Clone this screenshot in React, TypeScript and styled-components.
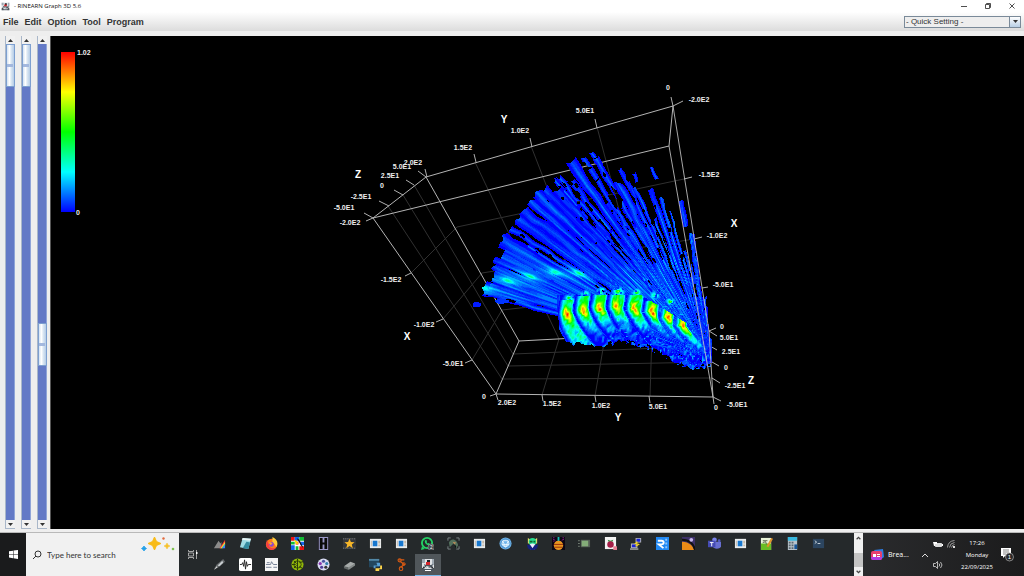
import React from "react";
import styled, { createGlobalStyle } from "styled-components";

const GlobalStyle = createGlobalStyle`
  *, *::before, *::after { box-sizing: border-box; }
  body { margin: 0; background: #eeeeee; font-family: "Liberation Sans", Arial, sans-serif; }
  button { border: 0; padding: 0; margin: 0; background: none; font: inherit; color: inherit; }
  svg { display: block; }
`;

/* ---------- window frame ---------- */

const Screen = styled.div`
  display: flex;
  flex-direction: column;
  height: 100vh;
  overflow: hidden;
`;

const TitleBar = styled.header`
  display: flex;
  align-items: center;
  height: 12px;
  padding-left: 1px;
  background: #fff;
`;

const Title = styled.h1`
  flex: 1;
  margin: 0 0 0 4px;
  font: 400 6px/12px "Open Sans", "Noto Sans", sans-serif;
  color: #111;
`;

const WindowButton = styled.button`
  display: grid;
  place-items: center;
  width: 24px;
  height: 12px;
`;

const MenuBar = styled.nav`
  display: flex;
  align-items: center;
  gap: 6px;
  height: 19px;
  padding: 0 3px;
  background: linear-gradient(#ffffff, #dcdcdc);
`;

const MenuButton = styled.button`
  font-size: 9px;
  line-height: 18px;
  font-weight: 700;
  color: #333;
`;

const SelectFrame = styled.label`
  display: flex;
  width: 117px;
  height: 12px;
  margin-left: auto;
  border: 1px solid #7a8a99;
  background: #eeeeee;
`;

const QuickSelect = styled.select`
  flex: 1;
  min-width: 0;
  appearance: none;
  border: 0;
  padding: 0 0 0 1px;
  background: transparent;
  font: 400 8px/10px "Liberation Sans", Arial, sans-serif;
  color: #333;
`;

const SelectArrow = styled.span`
  display: grid;
  place-items: center;
  width: 11px;
  border-left: 1px solid #7a8a99;
  background: linear-gradient(#ffffff, #b8cfe5);
`;

const Workspace = styled.main`
  display: flex;
  flex: 1;
  min-height: 0;
  padding: 5px 0 3px;
`;

const SliderRack = styled.div`
  display: flex;
  gap: 6px;
  padding: 0 3px 0 5px;
`;

const ScrollColumn = styled.div`
  display: flex;
  flex-direction: column;
  width: 10px;
  border: 1px solid #a9b7c9;
  border-width: 0 0 1px 1px;
`;

const ArrowButton = styled.button`
  display: grid;
  place-items: center;
  height: 8px;
  background: #f1f1f1;
`;

const RangeInput = styled.input`
  flex: 1;
  min-height: 0;
  width: 9px;
  margin: 0;
  appearance: none;
  writing-mode: vertical-lr;
  background: #6379c6;
  border-right: 1px solid #8fa4d8;
  &::-webkit-slider-thumb {
    appearance: none;
    width: 9px;
    height: 43px;
    border: 1px solid #7d9fd0;
    background:
      linear-gradient(#a3b8de, #a3b8de) center / 6px 3px no-repeat,
      linear-gradient(90deg, #d3e2f2, #ffffff 35%, #dbe7f3 60%, #b5cce6);
  }
`;

const PlotPane = styled.section`
  flex: 1;
  min-width: 0;
  background: #000;
  border-left: 1px solid #555;
  svg { width: 100%; height: 100%; }
`;

const TickText = styled.text`
  font: 700 7px "Liberation Sans", Arial, sans-serif;
  fill: #eee;
`;

const AxisText = styled.text`
  font: 700 10px "Liberation Sans", Arial, sans-serif;
  fill: #fff;
`;

/* ---------- scatter field ---------- */

const hash = (x: number, y: number) => {
  let h = Math.imul(x | 0, 374761393) + Math.imul(y | 0, 668265263);
  h = Math.imul(h ^ (h >>> 13), 1274126177);
  return ((h ^ (h >>> 16)) >>> 0) / 4294967296;
};

const noise = (x: number, y: number) => {
  const ix = Math.floor(x);
  const iy = Math.floor(y);
  const sx = x - ix;
  const sy = y - iy;
  const fx = sx * sx * (3 - 2 * sx);
  const fy = sy * sy * (3 - 2 * sy);
  const top = hash(ix, iy) * (1 - fx) + hash(ix + 1, iy) * fx;
  const low = hash(ix, iy + 1) * (1 - fx) + hash(ix + 1, iy + 1) * fx;
  return top * (1 - fy) + low * fy;
};

/* angle, half width in degrees, inner radius, outer radius, raggedness */
const beams: number[][] = [
  [16.2, 0.9, 150, 236, 0.1], [18.1, 1.1, 60, 238, 0.05], [20.4, 1.2, 60, 232, 0.1],
  [22.6, 1.1, 60, 236, 0.1], [24.6, 0.9, 60, 238, 0.2], [26.4, 0.9, 60, 228, 0.2],
  [29.4, 1.9, 60, 240, 0], [31.4, 0.6, 40, 214, 0.2], [33, 0.8, 40, 237, 0.2],
  [35.7, 1.5, 40, 237, 0], [38.4, 1.4, 40, 239, 0], [40.9, 1, 40, 238, 0.05],
  [43.4, 1.3, 30, 240, 0.05], [45.5, 1, 30, 236, 0.1], [47.4, 1.1, 30, 228, 0.1],
  [48.9, 0.5, 150, 237, 0.4], [50, 0.6, 40, 240, 0.4], [51.8, 0.9, 30, 226, 0.3],
  [54.6, 1.4, 30, 241, 0.02], [56.5, 0.6, 30, 185, 0.5], [57.7, 0.7, 30, 236, 0.35],
  [60.4, 0.8, 30, 230, 0.35], [60.4, 0.5, 230, 237, 0], [62.4, 1.3, 20, 199, 0.1],
  [64.8, 0.7, 30, 210, 0.35], [66.3, 0.7, 20, 187, 0.4], [67.4, 0.5, 190, 200, 0.1],
  [68.6, 0.5, 20, 150, 0.4], [70.7, 1, 20, 180, 0.1], [73, 0.8, 20, 168, 0.4],
  [73.4, 0.5, 186, 200, 0.1], [75.2, 0.6, 20, 152, 0.3], [77, 0.5, 20, 110, 0.4],
  [79.7, 1, 133, 161, 0.25], [81.4, 1.1, 10, 127, 0.05], [85, 1.4, 0, 62, 0.5],
];

/* hottest point of each crest, its lean and its core strength */
const crests: number[][] = [
  [566, 314, 0.1, 0.5], [582, 310, 0.3, 0.46], [598, 307, 0.3, 0.44], [615, 306, 0.3, 0.46],
  [633, 308, 0.35, 0.44], [651, 311, 0.45, 0.44], [667, 317, 0.55, 0.4], [682, 325, 0.65, 0.4],
];

const glows: number[][] = [[507, 280], [530, 276], [554, 272], [484, 288], [578, 273]];

const floorLine: number[][] = [
  [556, 298], [559, 330], [566, 342], [600, 345], [625, 340], [650, 347],
  [670, 358], [690, 367], [712, 364],
];

const floorAt = (x: number) => {
  for (let i = 1; i < floorLine.length; i++) {
    const [x1, y1] = floorLine[i];
    if (x <= x1) {
      const [x0, y0] = floorLine[i - 1];
      return y0 + ((x - x0) / (x1 - x0)) * (y1 - y0);
    }
  }
  return 364;
};

const crestLeft = (c: number[], y: number) => {
  const v = y - c[1];
  return c[0] - 9 + (v > 0 ? 0.01 * v * v + c[2] * v : -0.15 * v);
};

/* returns -1 where nothing is plotted, otherwise 0..1 on the colour scale */
const sample = (x: number, y: number) => {
  const dx = 709 - x;
  const dy = 357 - y;
  const r = Math.hypot(dx, dy);
  const angle = (Math.atan2(dy, dx) * 180) / Math.PI;
  let value = -1;

  for (const [a, w, r0, r1, rag] of beams) {
    const end = r1 - 3 + 4 * noise(angle + a, 3);
    if (r < r0 || r > end) continue;
    const wobble = (noise(r / 14, a * 5) - 0.5) * 0.8;
    const swell = 0.85 + 0.4 * noise(r / 11, a * 3 + 17);
    const spread = w * swell * (r < 130 ? 1 + (130 - r) / 90 : 1);
    const off = Math.abs(angle - a - wobble) / spread;
    const hole = noise(r / 7, a * 7 + angle) < rag * 0.75;
    if (off < 1 && !hole) {
      const near = Math.max(0, 1 - Math.abs(r - 90) / 90);
      const streak = noise(angle * 2.6, r / 36);
      const fine = noise(angle * 6, r / 20);
      const v =
        Math.max(0, 1 - off * 1.15) * (0.03 + 0.13 * streak) + 0.26 * near * Math.max(0, fine - 0.45);
      value = Math.max(value, v);
    }
  }

  if (r < 175 && angle > 12 && angle < 62 && y < floorAt(x)) {
    const s = noise(angle * 1.7 + 9, r / 24);
    const limit = 0.18 + Math.max(0, r - 60) / 240;
    if (s > limit) value = Math.max(value, (s - limit) * 0.2);
  }
  if (r < 95 && angle >= 62 && angle < 80) {
    const s = noise(angle * 0.9, r / 10);
    if (s > 0.3 + r / 260) value = Math.max(value, (s - 0.3) * 0.12);
  }

  if (r > 120 && angle > 15.5 && angle < 28 && r < 231) {
    const s = noise(angle * 2.1, r / 34);
    if (s > 0.28) value = Math.max(value, (s - 0.2) * 0.2);
  }

  for (const [gx, gy] of glows) {
    const along = (x - gx) * 0.94 + (y - gy) * 0.34;
    const across = (y - gy) * 0.94 - (x - gx) * 0.34;
    const halo = Math.exp(-((along / 14) ** 2) - (across / 4) ** 2);
    const core = Math.exp(-((along / 5) ** 2) - (across / 2) ** 2);
    if (value >= 0) value += 0.12 * halo + 0.16 * core;
  }

  if (Math.hypot((x - 476) / 1.6, y - 304) < 2.1 + noise(x / 2, y / 2)) value = 0.03;
  if (Math.hypot((x - 501) / 3, y - 301) < 1.8 + noise(x / 3, y / 2)) value = 0.07;

  const floor = floorAt(x) + (noise(x / 3, 7) - 0.5) * 6;
  const roof = 294 + Math.max(0, x - 640) * 0.62;
  if (x > 556 && x < 712 && y < floor && y > roof) {
    const grain = noise(x / 3 + y / 7, y / 3 - x / 6);
    let v = 0.005 + grain * 0.1;
    if (x > 605 && y > floor - 10 && grain < 0.35) v = -1;
    crests.forEach((c, i) => {
      const left = crestLeft(c, y);
      const next = crests[i + 1];
      const right = next ? crestLeft(next, y) - 1 : left + 13;
      if (x < left || x > right) return;
      const u = x - left;
      const dv = y - c[1];
      const edge = Math.min(1, (u / 6) ** 1.3) * Math.min(1, (right - x + 1) / 3);
      const scale = i > 4 ? 0.75 : 1;
      const body =
        dv < -14 * scale ? 0.08 : dv < 4 ? 0.42 : Math.max(0.04, 0.4 - (dv - 4) * (i ? 0.015 : 0.007));
      const hx = (u - 9.5) / 3.6;
      const hy = (dv - (u - 9) * 0.7) / (i > 4 ? 9 : 6.5);
      const hot = c[3] * Math.exp(-hx * hx - hy * hy);
      const mottled = (noise(x / 2.5, y / 3 + x / 5) - 0.5) * 0.24;
      v = Math.max(0.01, edge * (body + hot + mottled));
    });
    if (v >= 0) value = Math.max(v, x > 650 ? value * 0.8 : v);
  }

  /* curls rising above the crests */
  crests.slice(0, 7).forEach(([cx, cy], i) => {
    const d = Math.hypot((x - cx - 3) / 1.2, y - cy + (i === 3 ? 15 : 16));
    const reach = i === 3 ? 6 : 4.5;
    if (d < reach) {
      const n = noise(x / 2.2, y / 2.2);
      if (n > 0.3) value = Math.max(value, 0.08 + (1 - d / reach) * 0.6 * n);
    }
  });

  /* loose echoes close to the origin */
  if (x > 606 && x < 711 && y > 296 && y < floorAt(x) + 3 && angle < 66) {
    const n = noise(x / 2 + 40, y / 2);
    if (n > 0.66) value = Math.max(value, (n - 0.66) * 0.6);
  }
  return value;
};

const ramp = (t: number) => {
  const c = (n: number) => Math.round(255 * Math.max(0, Math.min(1, n)));
  return `rgb(${c(4 * t - 2)},${c(t < 0.5 ? 4 * t : 4 - 4 * t)},${c(2 - 4 * t)})`;
};

const LEVELS = 40;

const buildCloud = () => {
  const layers: string[] = Array(LEVELS).fill("");
  for (let y = 146; y < 374; y++) {
    let start = 468;
    let current = -1;
    for (let x = 468; x <= 716; x++) {
      const v = x === 716 ? -1 : sample(x, y);
      const level = v < 0 ? -1 : Math.min(LEVELS - 1, Math.floor(v * LEVELS));
      if (level !== current) {
        if (current >= 0) layers[current] += `M${start} ${y}h${x - start}v1h${start - x}z`;
        start = x;
        current = level;
      }
    }
  }
  return layers;
};

const cloud = buildCloud();

/* ---------- plot geometry ---------- */

const backEdges =
  "M673 106L426 177L373 218L669 146ZM426 177L519 341L496 394L373 218M519 341L709 331M496 394L713 397";
const frontEdges = "M673 106L709 331L713 397L669 146";
const gridLines =
  "M457 227L684 179M482 273L694 239M502 310L702 288" +
  "M475 162L559 339L542 395M531 146L605 337L595 396M597 127L652 334L650 396" +
  "M414 185L513 354L710 346M403 195L508 366L712 362M388 206L502 379L712 378" +
  "M411 273L457 227M443 319L482 273M472 360L502 310";
const tickLines =
  "M673 106L671 97M673 106L683 101M597 128L595 119M532 147L530 138M476 162L474 154M427 177L425 169" +
  "M426 177L418 171M414 185L406 180M403 195L394 190M389 206L379 201M373 218L364 213M373 218L366 221" +
  "M411 273L405 276M443 319L436 322M472 360L465 363M496 394L490 396M496 394L498 400M542 395L543 401" +
  "M595 396L596 402M649 396L650 403M713 397L714 404M713 397L721 401M712 378L720 383M712 362L719 366" +
  "M710 346L717 350M709 331L717 336M709 331L716 328M702 288L708 287M694 239L702 237M684 179L692 177";

const tickLabels: [string, number, number][] = [
  ["0", 668, 90], ["-2.0E2", 699, 102], ["5.0E1", 585, 113], ["1.0E2", 520, 133],
  ["1.5E2", 463, 150], ["2.0E2", 413, 165], ["5.0E1", 402, 169], ["2.5E1", 390, 178],
  ["0", 382, 188], ["-2.5E1", 361, 199], ["-5.0E1", 344, 210], ["-2.0E2", 350, 225],
  ["-1.5E2", 391, 282], ["-1.0E2", 424, 327], ["-5.0E1", 453, 366], ["0", 484, 399],
  ["2.0E2", 507, 405], ["1.5E2", 552, 406], ["1.0E2", 601, 408], ["5.0E1", 658, 409],
  ["0", 716, 410], ["-5.0E1", 737, 407], ["-2.5E1", 735, 388], ["0", 726, 370],
  ["2.5E1", 731, 354], ["5.0E1", 729, 340], ["0", 722, 329], ["-5.0E1", 723, 287],
  ["-1.0E2", 717, 238], ["-1.5E2", 709, 177],
];

const axisLabels: [string, number, number][] = [
  ["Y", 504, 123], ["Z", 358, 178], ["X", 734, 227], ["X", 407, 340], ["Z", 751, 384], ["Y", 618, 421],
];

const Plot = () => (
  <svg viewBox="51 36 973 493" preserveAspectRatio="xMinYMin meet" role="img" aria-label="3D graph">
    <defs>
      <linearGradient id="scale" x1="0" y1="0" x2="0" y2="1">
        <stop offset="0" stopColor="#f00" />
        <stop offset=".25" stopColor="#ff0" />
        <stop offset=".5" stopColor="#0f0" />
        <stop offset=".75" stopColor="#0ff" />
        <stop offset="1" stopColor="#00f" />
      </linearGradient>
    </defs>
    <rect x="61" y="52" width="14" height="160" fill="url(#scale)" />
    <TickText x="77" y="55">1.02</TickText>
    <TickText x="76" y="215">0</TickText>
    <g fill="none">
      <path d={gridLines} stroke="#303030" />
      <path d={backEdges} stroke="#b4b4b4" />
      <path d={tickLines} stroke="#b0b0b0" />
    </g>
    <g shapeRendering="crispEdges">
      {cloud.map((d, i) => (d ? <path key={i} d={d} fill={ramp(i / (LEVELS - 1))} /> : null))}
    </g>
    <path d={frontEdges} fill="none" stroke="#c4c4c4" strokeOpacity=".85" />
    {tickLabels.map(([t, x, y], i) => (
      <TickText key={i} x={x} y={y} textAnchor="middle">{t}</TickText>
    ))}
    {axisLabels.map(([t, x, y], i) => (
      <AxisText key={i} x={x} y={y} textAnchor="middle">{t}</AxisText>
    ))}
  </svg>
);

const JavaIcon = ({ size }: { size: number }) => (
  <svg width={size} height={size} viewBox="0 0 14 14">
    <path d="M1 1h12v12H1z" fill="#dfe3e6" />
    <path d="M1 1h3v4H1zM11 1h2v6h-2z" fill="#9faab3" />
    <path d="M6 2h3v3H6z" fill="#1c2328" />
    <path d="M5 4h4v3H5z" fill="#d5262c" />
    <path d="M3 6l2 1h5l2-1-1 3-3 1-4-1zM1 10l3 1h6l3-1v3H1z" fill="#4b565f" />
    <path d="M3 8l1 2-3 1zM11 8l2 3-3-1z" fill="#20262b" />
    <path d="M5 8l4 1-3 1zM4 12h6v1H4z" fill="#fff" />
  </svg>
);

const Triangle = ({ down = false }: { down?: boolean }) => (
  <svg width="5" height="3" viewBox="0 0 5 3">
    <path d={down ? "M0 0h5L2.5 3z" : "M0 3h5L2.5 0z"} fill="#333" />
  </svg>
);

const Slider = ({ label, value }: { label: string; value: number }) => (
  <ScrollColumn>
    <ArrowButton aria-label={`${label} up`}><Triangle /></ArrowButton>
    <RangeInput type="range" min={0} max={1000} defaultValue={value} aria-label={label} />
    <ArrowButton aria-label={`${label} down`}><Triangle down /></ArrowButton>
  </ScrollColumn>
);

/* ---------- taskbar ---------- */

const Taskbar = styled.footer`
  display: flex;
  height: 44px;
  border-top: 1px solid #b9b9b9;
  background: #25292b;
  color: #fff;
`;

const StartButton = styled.button`
  display: grid;
  place-items: center;
  width: 26px;
  background: #1a1b1c;
`;

const SearchBox = styled.label`
  display: flex;
  align-items: center;
  gap: 5px;
  width: 153px;
  padding: 0 4px 0 6px;
  background: #f1f1f1;
`;

const SearchInput = styled.input`
  flex: 1;
  min-width: 0;
  height: 12px;
  padding: 0;
  border: 0;
  background: transparent;
  font: 400 8px/12px Lato, "Noto Sans", sans-serif;
  color: #333;
  &::placeholder { color: #333; opacity: 1; }
`;

const Sparkles = styled.span`
  align-self: flex-start;
  padding-top: 2px;
`;

const TaskViewButton = styled.button`
  display: grid;
  place-items: center;
  width: 27px;
`;

const AppGrid = styled.div`
  flex: 1;
  display: grid;
  grid-template-columns: repeat(24, minmax(0, 1fr));
  grid-template-rows: 21px 22px;
  padding-right: 22px;
`;

const AppButton = styled.button<{ $active?: boolean }>`
  display: grid;
  place-items: center;
  background: ${(p) => (p.$active ? "#50565a" : "transparent")};
  border-bottom: 1px solid ${(p) => (p.$active ? "#76b9ed" : "transparent")};
`;

const OverflowScroll = styled.div`
  display: flex;
  flex-direction: column;
  width: 9px;
  background: #f0f0f0;
`;

const OverflowButton = styled.button`
  display: grid;
  place-items: center;
  height: 9px;
`;

const OverflowThumb = styled.span`
  height: 14px;
  margin-top: auto;
  background: #c4c4c4;
`;

const Tray = styled.div`
  display: flex;
  align-items: center;
  width: 161px;
  padding-left: 8px;
  background: linear-gradient(90deg, #2a2b2d, #1b1b1c);
  font: 400 6px/12px "Open Sans", "Noto Sans", sans-serif;
`;

const NewsButton = styled.button`
  display: flex;
  align-items: center;
  gap: 4px;
  width: 46px;
  font-size: 7px;
`;

const TrayButton = styled.button`
  display: grid;
  place-items: center;
  width: 16px;
  height: 20px;
`;

const StatusIcons = styled.div`
  display: grid;
  grid-template-columns: 10px 16px;
  grid-template-rows: 21px 21px;
  place-items: center;
`;

const Clock = styled.time`
  width: 36px;
  margin-right: 4px;
  text-align: center;
`;

const art: React.ReactNode[] = [
  <><path d="M1 12L6 4l2 3 1-2v7z" fill="#8b8b8b" /><path d="M7 12l6-9v3l-4 6z" fill="#f33" /><path d="M8 12l5-7v3l-3 4z" fill="#fd3" /><path d="M9 12l4-5v2l-2 3z" fill="#3c9" /><path d="M10 12l3-4v4z" fill="#47f" /></>,
  <><path d="M4 1l9 1-3 11-9-2z" fill="#9fdbe4" /><path d="M4 1l9 1-1 2-9-1z" fill="#e9f4f5" /><path d="M8 5l4 1-2 7-6-1z" fill="#348ba0" /></>,
  <><circle cx="7" cy="8" r="6" fill="#ff7a1c" /><path d="M8 0c5 2 7 7 4 11-1-4-3-4-4-6z" fill="#ffcb3a" /><path d="M2 3c0 3-2 6 1 9 3 3 8 2 9-1-3 2-8 1-8-3z" fill="#f33a45" /><circle cx="7" cy="8" r="2.500" fill="#8a45d8" /><path d="M4 6c2-1 3 0 4 1l-2 2z" fill="#ffa52c" /></>,
  <><path d="M0 0h14v14H0z" fill="#fff" /><path d="M0 0h4v4H0zM5 5h3v3H5zM9 10h5v4H9z" fill="#e11" /><path d="M4 0h5v4H4zM0 9h4v5H0zM10 5h4v4h-4z" fill="#16e" /><path d="M9 0h5v4H9zM0 5h4v3H0zM5 10h3v4H5z" fill="#1b3" /><path d="M3 3l3 1 2 3-2 1z" fill="#fd0" /><path d="M6 1l1 2 5 8 1 0-4-8z" fill="#111" /></>,
  <><path d="M0 0h14v14H0z" fill="#9a98c8" /><path d="M0 0h2v14H0zM12 0h2v14h-2z" fill="#26262d" /><path d="M3 1h3v5h2V1h3v12H8V8H6v5H3z" fill="#0a0a0a" /></>,
  <><path d="M0 1h14v12H0z" fill="#34373b" /><path d="M0 2h14M0 12h14" stroke="#888" strokeDasharray="1 1" /><path d="M7 2l1.500 3.500 4 .2-3 2.300 1 4L7 9.800 3.500 12l1-4-3-2.300 4-.2z" fill="#f6b629" /></>,
  "window",
  "window",
  <><circle cx="6.500" cy="6.500" r="5.500" fill="none" stroke="#25d366" strokeWidth="2" /><path d="M0 14l1-4 3 3z" fill="#25d366" /><path d="M4 4c0 3 2 5 5 5l1-1.500-2-1-1 .5-1-1.500.5-1-1-1.500z" fill="#25d366" /><circle cx="11" cy="11" r="3.500" fill="#444b4f" stroke="#aaa" strokeWidth=".6" /><text x="11" y="13" fontSize="5" textAnchor="middle" fill="#fff" fontFamily="Liberation Sans">2</text></>,
  <><path d="M1 4V1h3M10 1h3v3M13 10v3h-3M4 13H1v-3" fill="none" stroke="#7d8787" /><path d="M2 6c3-6 9-3 10 3l-2 3-1-3-2-2-4 4z" fill="#526f5c" /><path d="M6 5l4 1-2 2z" fill="#b98b58" /><path d="M8 8l2 2-1 2z" fill="#101513" /></>,
  "window",
  <><circle cx="7" cy="7" r="6.500" fill="#70b6ec" /><path d="M4 4l6 0 1 4-4 3-4-3zM4 4l3 7 3-7M3 8h8" fill="none" stroke="#e6f5ff" /><circle cx="7" cy="7" r="5" fill="none" stroke="#3878b4" strokeWidth=".7" /></>,
  <><path d="M2 1l3 2h4l3-2v6H2z" fill="#e7de6b" /><circle cx="7" cy="5" r="4" fill="#28dd90" /><path d="M4 4h3v2H4zM8 4h2v2H8z" fill="#12632c" /><circle cx="7" cy="10.500" r="3.500" fill="#e8edf7" /><path d="M1 8l4 1 2 2 2-2 4-1-1 4-3 2H5l-3-2z" fill="#15207f" /><path d="M5 9h4l-2 3z" fill="#f2f2fa" /></>,
  <><path d="M0 0h14v14H0z" fill="#0c0714" /><path d="M1 2l4 3M13 2L9 5M2 0v5M12 0v4" stroke="#a020a0" strokeDasharray="1 1" /><path d="M6 0h2v5H6z" fill="#18bcb5" /><circle cx="7" cy="9" r="5" fill="#e89520" /><path d="M2 8h10M3 11h8" stroke="#952c0b" /></>,
  <><path d="M3 3h10v8H3z" fill="#565e58" /><path d="M4 4h7v6H4z" fill="#84ac79" /><path d="M0 4h2M0 7h2M0 10h2" stroke="#757f76" /></>,
  <><path d="M1 0h12v13H1z" fill="#f3f3f3" /><path d="M4 3l3 1 3-1-1 2H5z" fill="#2c8a38" /><circle cx="7" cy="8" r="3.500" fill="#a51e47" /><path d="M10 10h4v4h-4z" fill="#e77d90" /></>,
  <><path d="M6 1h6v5H6zM1 7h7v5H1z" fill="#b7b8b5" /><path d="M7 2h4v3H7zM2 8h5v3H2z" fill="#1822d8" /><path d="M8 5L6 7l3 1-3 2" fill="none" stroke="#f3d525" strokeWidth="1.500" /><path d="M0 12h9v2H0z" fill="#8b8c89" /></>,
  <><path d="M0 0h14v14H0z" fill="#2188f3" /><path d="M2 4h4c3 0 3 4 0 4H3l5 4" fill="none" stroke="#fff" strokeWidth="2" /><path d="M10 2h2v2h-2zM10 6h2v2h-2zM10 10h2v2h-2z" fill="#8dc7ff" /></>,
  <><path d="M0 0h14v14H0z" fill="#3d3068" /><path d="M0 5c8 0 12 5 13 9H0z" fill="#eb8b16" /><path d="M0 3c8 0 13 5 14 11" fill="none" stroke="#111" strokeWidth="2" /><circle cx="10" cy="3" r="2" fill="#c5b6ed" /></>,
  <><circle cx="7" cy="3" r="2.500" fill="#7b83eb" /><circle cx="12" cy="4" r="1.500" fill="#5059c9" /><path d="M5 5h9v5c0 3-8 4-9 0z" fill="#686fd1" /><path d="M0 4h8v7H0z" fill="#454bb4" /><path d="M2 6h4M4 6v4" stroke="#fff" /></>,
  "window",
  <><path d="M1 1h11v13H1z" fill="#e9f3d8" /><path d="M1 7h11v7H1z" fill="#69bd24" /><path d="M3 4h5M3 6l3-1 1 3" fill="none" stroke="#536143" /><path d="M7 10l5-9 2 1-5 9z" fill="#df922b" /></>,
  <><path d="M2 0h10v14H2z" fill="#b9c3ca" /><path d="M2 0h10v4H2z" fill="#38b8df" /><path d="M3 5h2v2H3zM6 5h2v2H6zM3 8h2v2H3zM6 8h2v2H6zM3 11h2v2H3zM6 11h2v2H6z" fill="#5b6871" /><path d="M9 8h3v5H9z" fill="#175598" /></>,
  <><path d="M1 2h12v10H1z" fill="#2c4560" /><path d="M3 4l2 1.500L3 7M6 7h3" fill="none" stroke="#cbd6df" /></>,
  <><path d="M1 12l3-5 7-6 2 3-7 6z" fill="#65696b" /><path d="M5 8l5-5 1 2-4 4z" fill="#c8cdd0" /><path d="M1 13l3-4 1 1z" fill="#ddd" /></>,
  <><rect x="0" y="0" width="14" height="14" rx="2" fill="#fff" /><path d="M1 7h2l1-2 1 4 1-7 1 10 1-8 1 5 1-2h3" fill="none" stroke="#222" /></>,
  <><path d="M0 0h14v14H0z" fill="#f5f5f5" /><path d="M1 7h5l1-3 2 3h4M1 10h6M9 10h4M2 5h3" fill="none" stroke="#6f7b90" /></>,
  <><circle cx="7" cy="7" r="6.500" fill="#92b70a" /><path d="M7 1v12M1 7h4M9 5l4-1M9 9l3 2M3 3l3 3M3 11l3-3" stroke="#26330a" /><circle cx="7" cy="7" r="4" fill="none" stroke="#34450a" /></>,
  <><circle cx="7" cy="7" r="6.500" fill="#d9dbf3" /><circle cx="7" cy="3.500" r="1.700" fill="#4852a1" /><circle cx="3.500" cy="6" r="1.700" fill="#8b36b1" /><circle cx="10.500" cy="6" r="1.700" fill="#337fae" /><circle cx="5" cy="10" r="1.700" fill="#4e3b96" /><circle cx="9.500" cy="10" r="1.700" fill="#333" /></>,
  <><path d="M1 9l7-5 5 2-7 6z" fill="#a6aaa9" /><path d="M1 9l5 1v3l-5-2z" fill="#626767" /><path d="M6 10l7-4v2l-7 5z" fill="#858a89" /></>,
  <><path d="M0 1h11v9H0z" fill="#23465d" /><path d="M0 1h11v2H0z" fill="#5287a6" /><path d="M8 5h4v4H7v2H5V8h4z" fill="#589fd4" /><path d="M14 8v4h-3v2H7v-3h5V8z" fill="#ffd64c" /></>,
  <><path d="M4 2h6M6 4l4 3-4 3" fill="none" stroke="#d65a14" strokeWidth="1.500" /><circle cx="5" cy="2.500" r="1.700" fill="none" stroke="#d65a14" strokeWidth="1.200" /><circle cx="9.500" cy="6.500" r="1.500" fill="none" stroke="#d65a14" /><circle cx="6.500" cy="11.500" r="1.900" fill="none" stroke="#d65a14" strokeWidth="1.200" /></>,
];

const names = [
  "Spectrum", "Notepad", "Firefox", "Mosaic", "Film", "Movie Maker", "Viewer 1", "Viewer 2", "WhatsApp",
  "Capture", "Viewer 3", "Cube", "Alien", "Lamp", "Chip", "Raspberry Pi", "PuTTY", "RealVNC", "Planet",
  "Teams", "Viewer 4", "Notepad++", "Calculator", "Terminal", "Pen", "Waveform", "Signals", "Radar",
  "Reel", "Scanner", "Python", "Hook",
];

const AppArt = ({ drawing }: { drawing: React.ReactNode }) => (
  <svg width="13" height="13" viewBox="0 0 14 14">
    {drawing === "window" ? (
      <>
        <path d="M1 2h12v10H1z" fill="#e9ecee" />
        <path d="M4 4h5v6H4z" fill="#1777ce" />
        <path d="M2 4h1v6H2zM10 4h2v3h-2zM10 8h2v2h-2z" fill="#c4b9a9" />
      </>
    ) : (
      drawing
    )}
  </svg>
);

const Chevron = ({ down = false, dark = false }: { down?: boolean; dark?: boolean }) => (
  <svg width={dark ? 5 : 8} height={dark ? 4 : 6} viewBox="0 0 8 6">
    <path d={down ? "M1 1l3 3 3-3" : "M1 5l3-3 3 3"} fill="none" stroke={dark ? "#444" : "#ddd"} strokeWidth={dark ? 2 : 1} />
  </svg>
);

const App = () => (
  <Screen>
    <GlobalStyle />
    <TitleBar>
      <JavaIcon size={9} />
      <Title>- RINEARN Graph 3D 5.6</Title>
      <WindowButton aria-label="Minimize">
        <svg width="6" height="6" viewBox="0 0 6 6"><path d="M0 3.500h6" stroke="#222" strokeWidth=".8" /></svg>
      </WindowButton>
      <WindowButton aria-label="Restore">
        <svg width="6" height="6" viewBox="0 0 6 6"><path d="M.5 1.500h4v4h-4zM1.500 1V.5h4v4H5" fill="none" stroke="#222" strokeWidth=".8" /></svg>
      </WindowButton>
      <WindowButton aria-label="Close">
        <svg width="6" height="6" viewBox="0 0 6 6"><path d="M.5.5l5 5M5.500.5l-5 5" stroke="#222" strokeWidth=".8" /></svg>
      </WindowButton>
    </TitleBar>
    <MenuBar>
      {["File", "Edit", "Option", "Tool", "Program"].map((m) => (
        <MenuButton key={m}>{m}</MenuButton>
      ))}
      <SelectFrame>
        <QuickSelect aria-label="Quick Setting">
          <option>- Quick Setting -</option>
        </QuickSelect>
        <SelectArrow><Triangle down /></SelectArrow>
      </SelectFrame>
    </MenuBar>
    <Workspace>
      <SliderRack>
        <Slider label="Rotation" value={0} />
        <Slider label="Tilt" value={0} />
        <Slider label="Zoom" value={644} />
      </SliderRack>
      <PlotPane><Plot /></PlotPane>
    </Workspace>
    <Taskbar>
      <StartButton aria-label="Start">
        <svg width="9" height="9" viewBox="0 0 9 9">
          <path d="M0 1.300L4 .7v3.500H0zM4.500.6L9 0v4.200H4.500zM0 4.700h4v3.500l-4-.6zM4.500 4.700H9V9l-4.500-.7z" fill="#fff" />
        </svg>
      </StartButton>
      <SearchBox>
        <svg width="10" height="10" viewBox="0 0 10 10">
          <circle cx="6" cy="4" r="3" fill="none" stroke="#333" />
          <path d="M4 6L1 9" stroke="#333" />
        </svg>
        <SearchInput type="text" placeholder="Type here to search" aria-label="Search" />
        <Sparkles>
          <svg width="34" height="18" viewBox="0 0 34 18">
            <path d="M13.500 2l2 4.500 4.500 2-4.500 2-2 4.500-2-4.500-4.500-2 4.500-2z" fill="#f8bb18" stroke="#f8bb18" strokeLinejoin="round" />
            <path d="M26 8l1 2 2 1-2 1-1 2-1-2-2-1 2-1z" fill="#f6c12b" stroke="#f6c12b" strokeWidth=".5" />
            <path d="M3 11l1 1.500 1.500 1-1.500 1L3 16l-1-1.500-1.500-1 1.500-1z" fill="#22a0e8" stroke="#22a0e8" strokeWidth=".8" />
            <circle cx="22.500" cy="3.500" r="1.200" fill="#e36a3c" />
            <circle cx="32" cy="14" r="1.300" fill="#7fc151" />
          </svg>
        </Sparkles>
      </SearchBox>
      <TaskViewButton aria-label="Task view">
        <svg width="10" height="9" viewBox="0 0 10 9">
          <path d="M.5 0v1.500h5V0M.5 3h5v3h-5zM.5 9V7.500h5V9M8.500 0v9" fill="none" stroke="#c5c5c5" strokeWidth=".8" />
          <path d="M8 2h1.500v2H8z" fill="#fff" />
        </svg>
      </TaskViewButton>
      <AppGrid>
        {art.map((drawing, i) => (
          <AppButton key={names[i]} aria-label={names[i]}><AppArt drawing={drawing} /></AppButton>
        ))}
        <AppButton $active aria-label="RINEARN Graph 3D"><JavaIcon size={14} /></AppButton>
      </AppGrid>
      <OverflowScroll>
        <OverflowButton aria-label="Scroll up"><Chevron dark /></OverflowButton>
        <OverflowThumb />
        <OverflowButton aria-label="Scroll down"><Chevron dark down /></OverflowButton>
      </OverflowScroll>
      <Tray>
        <NewsButton>
          <svg width="13" height="13" viewBox="0 0 13 13">
            <path d="M3 2l9-1 1 8-4 3z" fill="#2d7be0" />
            <rect x="0" y="3" width="11" height="9" rx="2" fill="#e8406e" />
            <path d="M0 9h11v1q0 2-2 2H2q-2 0-2-2z" fill="#b13de0" />
            <path d="M2 6h3v3H2zM6 6h3v1H6zM6 8h3v1H6z" fill="#fff" />
          </svg>
          Brea...
        </NewsButton>
        <TrayButton aria-label="Show hidden icons"><Chevron /></TrayButton>
        <StatusIcons>
          <svg width="10" height="7" viewBox="0 0 10 7">
            <path d="M2.500 2.500h6v3h-6z" fill="#ddd" stroke="#ddd" /><path d="M9 3h1v2H9zM0 1h4v2H2v2H1z" fill="#fff" />
          </svg>
          <svg width="8" height="8" viewBox="0 0 8 8">
            <path d="M.5 7.500Q1 1 7.500.5M2.500 7.500Q3 3 7.500 2.500M4.500 7.500Q5 5 7.500 4.500" fill="none" stroke="#bbb" strokeWidth=".8" /><path d="M6 6h2v2H6z" fill="#ddd" />
          </svg>
          <svg width="10" height="8" viewBox="0 0 10 8">
            <path d="M.5 2.500h2L4.500.5v7l-2-2h-2zM6 2.500q1.500 1.500 0 3M7.500 1q3 3 0 6" fill="none" stroke="#ddd" strokeWidth=".8" />
          </svg>
        </StatusIcons>
        <Clock>17:26<br />Monday<br />22/09/2025</Clock>
        <TrayButton aria-label="Notifications">
          <svg width="14" height="15" viewBox="0 0 14 15">
            <path d="M1 1h10v8H5l-2 2V9H1z" fill="#fff" />
            <path d="M3 3h6M3 5h6M3 7h3" stroke="#555" strokeWidth=".7" />
            <circle cx="9.500" cy="10" r="4" fill="#29292a" stroke="#aaa" strokeWidth=".7" />
            <text x="9.500" y="12" fontSize="6" fill="#fff" textAnchor="middle" fontFamily="Liberation Sans">1</text>
          </svg>
        </TrayButton>
      </Tray>
    </Taskbar>
  </Screen>
);

export default App;
